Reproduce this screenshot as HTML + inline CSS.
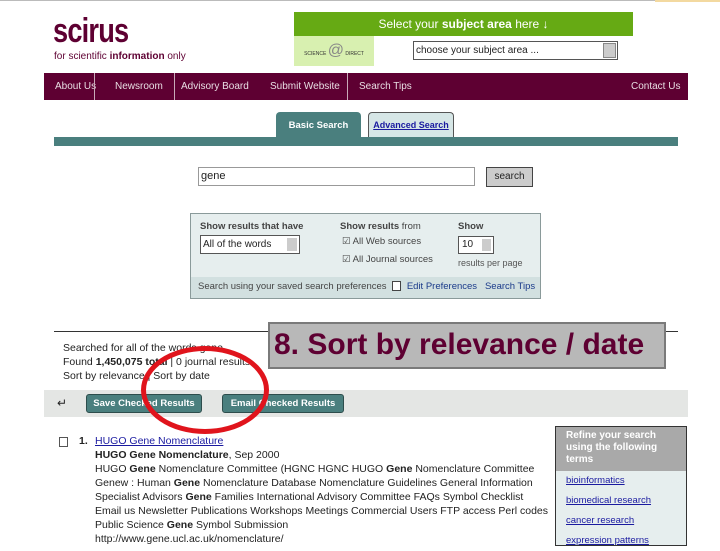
<!DOCTYPE html>
<html><head><meta charset="utf-8"><style>
*{margin:0;padding:0;box-sizing:border-box}
body{width:720px;height:540px;background:#fff;position:relative;overflow:hidden;font-family:"Liberation Sans",sans-serif;font-size:10px;color:#222}
.a{position:absolute}
.nav{left:44px;top:73px;width:644px;height:27px;background:#5e0032;color:#e8dde3;font-size:10px}
.nav span{position:absolute;top:8px}
.nav i{position:absolute;top:0;width:1px;height:27px;background:#c9a9b8}
a{color:#1a1aa0;text-decoration:underline}
.btn{background:#4a7f7e;color:#fff;border:1px solid #2d4d4c;border-radius:3px;font-size:9.5px;font-weight:bold;text-align:center;line-height:17px;height:19px}
.res{font-size:10.5px;line-height:14px;color:#222}
</style></head><body>
<div class="a" style="left:0;top:0;width:720px;height:1px;background:#bbb"></div>
<div class="a" style="left:655px;top:0;width:65px;height:2px;background:#f3d9a0"></div>
<div class="a" style="left:53px;top:14px;font-size:34px;font-weight:bold;color:#5e0032;letter-spacing:-1px;line-height:34px;transform:scaleX(0.8);transform-origin:left">scirus</div>
<div class="a" style="left:54px;top:51px;font-size:10px;color:#5e0032">for scientific <b>information</b> only</div>
<div class="a" style="left:294px;top:12px;width:339px;height:24px;background:#66aa14;color:#fff;font-size:12px;text-align:center;line-height:24px">Select your <b>subject area</b> here &#8595;</div>
<div class="a" style="left:294px;top:36px;width:80px;height:30px;background:#d8f0b0;font-size:5px;color:#333;text-align:center;line-height:30px">SCIENCE <span style="font-size:16px;color:#888">@</span> DIRECT</div>
<div class="a" style="left:413px;top:41px;width:205px;height:19px;border:1px solid #555;background:#fff;font-size:10px;line-height:17px;padding-left:2px">choose your subject area ...<span style="position:absolute;right:1px;top:1px;width:13px;height:15px;background:#ccc;border:1px solid #888"></span></div>
<div class="a nav">
<span style="left:11px">About Us</span><i style="left:50px"></i>
<span style="left:71px">Newsroom</span><i style="left:130px"></i>
<span style="left:137px">Advisory Board</span>
<span style="left:226px">Submit Website</span><i style="left:303px"></i>
<span style="left:315px">Search Tips</span>
<span style="left:587px">Contact Us</span>
</div>
<div class="a" style="left:276px;top:112px;width:85px;height:25px;background:#4a7f7e;border-radius:4px 4px 0 0;color:#fff;font-weight:bold;font-size:9.5px;text-align:center;line-height:27px">Basic Search</div>
<div class="a" style="left:368px;top:112px;width:86px;height:25px;background:#d6e6e6;border:1px solid #555;border-bottom:none;border-radius:4px 4px 0 0;font-size:9px;text-align:center;line-height:25px;white-space:nowrap"><a style="font-weight:bold">Advanced Search</a></div>
<div class="a" style="left:54px;top:137px;width:624px;height:9px;background:#4a7f7e"></div>
<div class="a" style="left:198px;top:167px;width:277px;height:19px;border:1px solid #999;font-size:11px;padding-left:2px;line-height:17px">gene</div>
<div class="a" style="left:486px;top:167px;width:47px;height:20px;background:#ccc;border:1px solid #444;font-size:10px;text-align:center;line-height:18px">search</div>
<div class="a" style="left:190px;top:213px;width:351px;height:86px;background:#e6eeee;border:1px solid #8a9a9a"></div>
<div class="a" style="left:191px;top:277px;width:349px;height:21px;background:#d2e0e0"></div>
<div class="a" style="left:200px;top:221px;font-size:9.5px;font-weight:bold;color:#444">Show results that have</div>
<div class="a" style="left:200px;top:235px;width:100px;height:19px;background:#fff;border:1px solid #555;font-size:10px;line-height:17px;padding-left:2px">All of the words<span style="position:absolute;right:2px;top:2px;width:10px;height:13px;background:#ccc"></span></div>
<div class="a" style="left:340px;top:221px;font-size:9.5px;color:#444"><b>Show results</b> from</div>
<div class="a" style="left:342px;top:236px;font-size:9.5px;color:#444">&#9745; All Web sources</div>
<div class="a" style="left:342px;top:254px;font-size:9.5px;color:#444">&#9745; All Journal sources</div>
<div class="a" style="left:458px;top:221px;font-size:9.5px;font-weight:bold;color:#444">Show</div>
<div class="a" style="left:458px;top:236px;width:36px;height:18px;background:#fff;border:1px solid #555;font-size:10px;line-height:16px;padding-left:3px">10<span style="position:absolute;right:2px;top:2px;width:9px;height:12px;background:#ccc"></span></div>
<div class="a" style="left:458px;top:258px;font-size:9px;color:#555">results per page</div>
<div class="a" style="left:198px;top:281px;font-size:9.5px;color:#444">Search using your saved search preferences <span style="display:inline-block;width:9px;height:10px;background:#fff;border:1px solid #444;vertical-align:middle;margin:0 3px"></span> <span style="color:#1a3a8a">Edit Preferences &nbsp; Search Tips</span></div>
<div class="a" style="left:54px;top:331px;width:624px;height:1px;background:#333"></div>
<div class="a res" style="left:63px;top:341px;font-size:10.5px">Searched for all of the words gene<br>Found <b>1,450,075 total</b> | 0 journal results<br>Sort by relevance | Sort by date</div>
<div class="a" style="left:268px;top:322px;width:398px;height:47px;background:#b8b8b8;border:2px solid #7a7a7a"></div>
<div class="a" style="left:274px;top:328px;font-size:30px;font-weight:bold;color:#5e0032;white-space:nowrap">8. Sort by relevance / date</div>
<div class="a" style="left:44px;top:390px;width:644px;height:27px;background:#e4e6e4"></div>
<div class="a" style="left:57px;top:396px;font-size:12px">&#8629;</div>
<div class="a btn" style="left:86px;top:394px;width:116px">Save Checked Results</div>
<div class="a btn" style="left:222px;top:394px;width:122px">Email Checked Results</div>
<div class="a" style="left:141px;top:346px;width:128px;height:88px;border:5px solid #e0141c;border-radius:50%"></div>
<div class="a" style="left:59px;top:437px;width:9px;height:10px;border:1px solid #555"></div>
<div class="a res" style="left:79px;top:434px;font-weight:bold">1.</div>
<div class="a res" style="left:95px;top:434px;white-space:nowrap"><a>HUGO Gene Nomenclature</a><br><b>HUGO Gene Nomenclature</b>, Sep 2000<br>HUGO <b>Gene</b> Nomenclature Committee (HGNC HGNC HUGO <b>Gene</b> Nomenclature Committee<br>Genew : Human <b>Gene</b> Nomenclature Database Nomenclature Guidelines General Information<br>Specialist Advisors <b>Gene</b> Families International Advisory Committee FAQs Symbol Checklist<br>Email us Newsletter Publications Workshops Meetings Commercial Users FTP access Perl codes<br>Public Science <b>Gene</b> Symbol Submission<br>http://www.gene.ucl.ac.uk/nomenclature/</div>
<div class="a" style="left:555px;top:426px;width:132px;height:120px;background:#e6eeee;border:1px solid #333"></div>
<div class="a" style="left:556px;top:427px;width:130px;height:44px;background:#a9a9a9;color:#fff;font-weight:bold;font-size:10px;line-height:12px;padding:3px 10px">Refine your search using the following terms</div>
<div class="a" style="left:566px;top:471px;font-size:9.5px;line-height:20px"><a>bioinformatics</a><br><a>biomedical research</a><br><a>cancer research</a><br><a>expression patterns</a></div>
</body></html>
